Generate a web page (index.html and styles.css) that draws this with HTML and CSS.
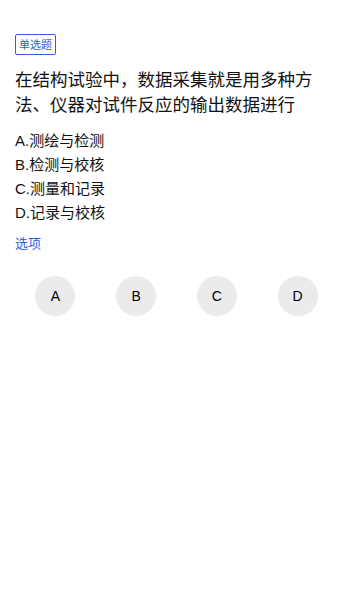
FILE: index.html
```html
<!DOCTYPE html>
<html lang="zh">
<head>
<meta charset="utf-8">
<link rel="stylesheet" href="styles.css">
</head>
<body>
<div class="page">
  <div class="head"><span class="badge">单选题</span></div>
  <div class="question">在结构试验中，数据采集就是用多种方法、仪器对试件反应的输出数据进行</div>
  <div class="options">
    <div class="opt">A.测绘与检测</div>
    <div class="opt">B.检测与校核</div>
    <div class="opt">C.测量和记录</div>
    <div class="opt">D.记录与校核</div>
  </div>
  <div class="label">选项</div>
  <div class="choices">
    <div class="slot"><span class="circle">A</span></div>
    <div class="slot"><span class="circle">B</span></div>
    <div class="slot"><span class="circle">C</span></div>
    <div class="slot"><span class="circle">D</span></div>
  </div>
</div>
</body>
</html>
```

FILE: styles.css
```css
html, body {
  margin: 0;
  padding: 0;
  background: #ffffff;
}
body {
  font-family: "Liberation Sans", "Noto Sans CJK SC", sans-serif;
  color: #111;
}
.page {
  padding: 34px 15px 0 15px;
}
.head {
  display: flex;
}
.badge {
  font-family: "Noto Sans CJK SC", sans-serif;
  font-size: 11px;
  line-height: 15px;
  padding: 2px 3px;
  border: 1px solid #2f5ee0;
  border-radius: 2px;
  color: #2f5ee0;
}
.question {
  margin-top: 11px;
  font-family: "Noto Sans CJK SC", sans-serif;
  font-size: 17.5px;
  line-height: 25px;
  color: #111;
}
.options {
  margin-top: 13px;
  display: flex;
  flex-direction: column;
}
.opt {
  font-size: 15px;
  line-height: 24px;
  color: #111;
}
.label {
  margin-top: 9px;
  font-family: "Noto Sans CJK SC", sans-serif;
  font-size: 13px;
  line-height: 18px;
  color: #2f5ee0;
}
.choices {
  margin-top: 24px;
  display: grid;
  grid-template-columns: repeat(4, 1fr);
}
.slot {
  display: flex;
  justify-content: center;
}
.circle {
  width: 40px;
  height: 40px;
  border-radius: 50%;
  background: #ebebee;
  display: flex;
  align-items: center;
  justify-content: center;
  font-size: 14px;
  color: #000;
}
```
